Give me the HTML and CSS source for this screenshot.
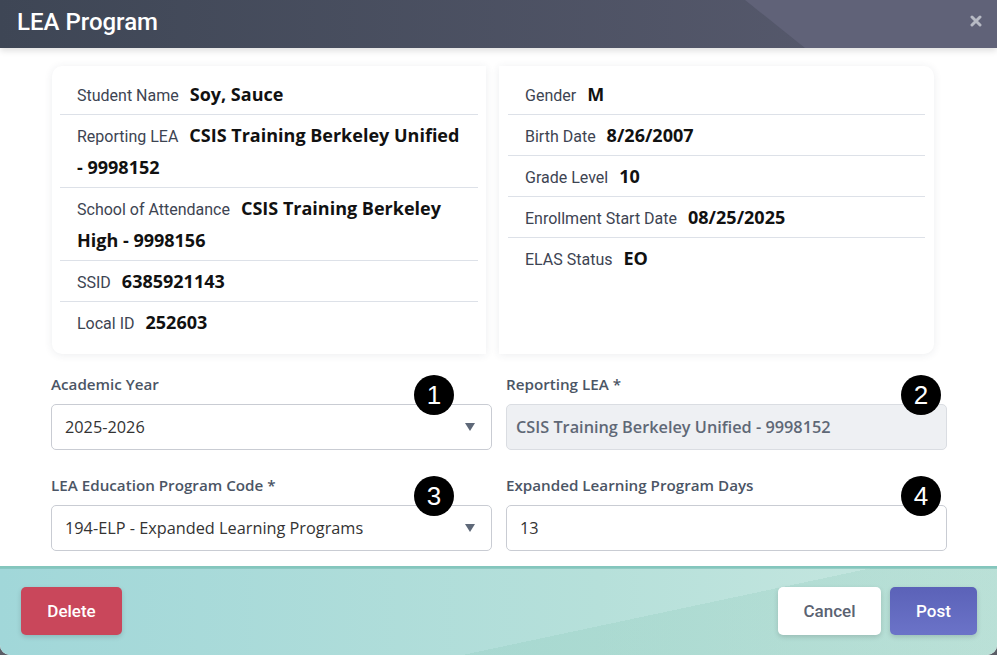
FILE: index.html
```html
<!DOCTYPE html>
<html lang="en">
    <head>
        <title>LEA Program</title>
        <meta name="viewport" content="width=device-width, initial-scale=1.0">
        <link rel="stylesheet" href="styles.css">
    </head>
    <body>
        <div class="modal">
            <div class="modal-header">
                <div class="modal-title">LEA Program</div>
                <button class="close-btn" type="button" aria-label="Close">
                    <svg width="12" height="12" viewBox="0 0 12 12">
                        <path d="M2 2 L10 10 M10 2 L2 10" stroke="#b7bac4" stroke-width="3" stroke-linecap="round"/>
                    </svg>
                </button>
            </div>

            <div class="modal-body">
                <div class="info-cards">
                    <div class="info-card info-card-left">
                        <div class="info-row"><span class="info-label">Student Name</span><span class="info-value">Soy, Sauce</span></div>
                        <div class="info-row"><span class="info-label">Reporting LEA</span><span class="info-value">CSIS Training Berkeley Unified - 9998152</span></div>
                        <div class="info-row"><span class="info-label">School of Attendance</span><span class="info-value">CSIS Training Berkeley High - 9998156</span></div>
                        <div class="info-row"><span class="info-label">SSID</span><span class="info-value">6385921143</span></div>
                        <div class="info-row"><span class="info-label">Local ID</span><span class="info-value">252603</span></div>
                    </div>
                    <div class="info-card info-card-right">
                        <div class="info-row"><span class="info-label">Gender</span><span class="info-value">M</span></div>
                        <div class="info-row"><span class="info-label">Birth Date</span><span class="info-value">8/26/2007</span></div>
                        <div class="info-row"><span class="info-label">Grade Level</span><span class="info-value">10</span></div>
                        <div class="info-row"><span class="info-label">Enrollment Start Date</span><span class="info-value">08/25/2025</span></div>
                        <div class="info-row"><span class="info-label">ELAS Status</span><span class="info-value">EO</span></div>
                    </div>
                </div>

                <div class="form-grid">
                    <div class="field">
                        <label class="field-label">Academic Year</label>
                        <div class="field-box">
                            <span>2025-2026</span>
                            <span class="caret"></span>
                        </div>
                        <span class="step step-left">1</span>
                    </div>
                    <div class="field">
                        <label class="field-label">Reporting LEA *</label>
                        <div class="field-box field-disabled">
                            <span>CSIS Training Berkeley Unified - 9998152</span>
                        </div>
                        <span class="step step-right">2</span>
                    </div>
                    <div class="field">
                        <label class="field-label">LEA Education Program Code *</label>
                        <div class="field-box">
                            <span>194-ELP - Expanded Learning Programs</span>
                            <span class="caret"></span>
                        </div>
                        <span class="step step-left">3</span>
                    </div>
                    <div class="field">
                        <label class="field-label">Expanded Learning Program Days</label>
                        <div class="field-box">
                            <span>13</span>
                        </div>
                        <span class="step step-right">4</span>
                    </div>
                </div>
            </div>

            <div class="modal-footer">
                <button class="btn btn-delete" type="button">Delete</button>
                <div class="footer-actions">
                    <button class="btn btn-cancel" type="button">Cancel</button>
                    <button class="btn btn-post" type="button">Post</button>
                </div>
            </div>
        </div>
    </body>
</html>
```

FILE: styles.css
```css
* {
    box-sizing: border-box;
}

body {
    margin: 0;
    background-color: #5a5d66;
    font-family: 'Open Sans', sans-serif;
}

.modal {
    width: 997px;
    height: 655px;
    display: flex;
    flex-direction: column;
    background-color: white;
    border-radius: 0 0 10px 10px;
    overflow: hidden;
}

/* header */
.modal-header {
    position: relative;
    height: 48px;
    flex: none;
    display: flex;
    align-items: center;
    justify-content: space-between;
    padding: 0 14px 0 17px;
    background: linear-gradient(to right, #3e4655, #5a5c70);
    box-shadow: 0 3px 6px rgba(0, 0, 0, 0.12);
    z-index: 1;
}

.modal-header::after {
    content: "";
    position: absolute;
    top: 0;
    right: 0;
    bottom: 0;
    left: 0;
    background-color: #606278;
    clip-path: polygon(745px 0, 100% 0, 100% 100%, 805px 100%);
}

.modal-title {
    position: relative;
    z-index: 1;
    color: white;
    font-family: Roboto, sans-serif;
    font-weight: 500;
    font-size: 24px;
    margin-top: -4px;
}

.close-btn {
    position: relative;
    z-index: 1;
    background: none;
    border: none;
    padding: 0;
    width: 14px;
    height: 14px;
    display: flex;
    align-items: center;
    justify-content: center;
    margin-top: -6px;
}

/* body */
.modal-body {
    flex: 1;
    padding: 18px 50px 0 51px;
}

.info-cards {
    display: grid;
    grid-template-columns: 434px 435px;
    gap: 13px;
    margin-left: 1px;
}

.info-card {
    height: 288px;
    background-color: white;
    padding: 8px 8px;
    box-shadow: 0 1px 8px rgba(40, 50, 80, 0.09);
}

.info-card-left {
    border-radius: 10px 0 0 10px;
}

.info-card-right {
    border-radius: 0 10px 10px 0;
    padding: 8px 9px;
}

.info-row {
    padding: 4px 17px;
    font-family: 'Open Sans', sans-serif;
    font-size: 18px;
    line-height: 32px;
    border-bottom: 1px solid #dde1e8;
}

.info-row:last-child {
    border-bottom: none;
}

.info-label {
    font-family: Roboto, sans-serif;
    font-size: 16px;
    line-height: 1;
    color: #3d4452;
    margin-right: 11px;
}

.info-value {
    font-weight: 700;
    color: #111;
}

/* form */
.form-grid {
    display: grid;
    grid-template-columns: 441px 441px;
    column-gap: 14px;
    row-gap: 25px;
    margin-top: 20px;
}

.field {
    position: relative;
}

.field-label {
    display: block;
    font-weight: 600;
    font-size: 15.2px;
    color: #4b5565;
    line-height: 20px;
    margin-bottom: 10px;
}

.field-box {
    height: 46px;
    border: 1px solid #c9ccd3;
    border-radius: 5px;
    padding: 0 16px 0 13px;
    display: flex;
    align-items: center;
    justify-content: space-between;
    font-size: 16.3px;
    color: #333;
    background-color: white;
}

.field-disabled {
    background-color: #eef0f3;
    border-color: #dadde2;
    color: #5f6876;
    font-weight: 600;
    padding-left: 9px;
}

.caret {
    width: 0;
    height: 0;
    border-left: 5.5px solid transparent;
    border-right: 5.5px solid transparent;
    border-top: 8px solid #5e6878;
}

.step {
    position: absolute;
    top: 1px;
    width: 40px;
    height: 40px;
    border-radius: 50%;
    background-color: black;
    color: white;
    font-family: 'Liberation Sans', Arial, sans-serif;
    font-size: 26px;
    line-height: 40px;
    text-align: center;
}

.step-left {
    right: 38px;
}

.step-right {
    right: 6px;
}

/* footer */
.modal-footer {
    height: 89px;
    flex: none;
    display: flex;
    align-items: center;
    justify-content: space-between;
    padding: 0 20px 2px 21px;
    border-top: 2px solid #84c6bd;
    background:
        linear-gradient(168deg, transparent 0 62%, rgba(120, 190, 170, 0.18) 62% 100%),
        linear-gradient(to right, #a1d7d9, #b6e0da 60%, #c9e8e1);
    box-shadow: inset 0 8px 0 -7px rgba(120, 190, 180, 0.6);
}

.footer-actions {
    display: flex;
    gap: 9px;
}

.btn {
    height: 48px;
    border: none;
    border-radius: 5px;
    font-family: Roboto, sans-serif;
    font-weight: 500;
    font-size: 17px;
    box-shadow: 0 2px 5px rgba(0, 0, 0, 0.15);
}

.btn-delete {
    width: 101px;
    background-color: #c9475b;
    color: white;
}

.btn-cancel {
    width: 103px;
    background-color: white;
    color: #5b6372;
}

.btn-post {
    width: 87px;
    background: linear-gradient(to bottom, #5b62b8, #6b73c8);
    color: white;
}
```
